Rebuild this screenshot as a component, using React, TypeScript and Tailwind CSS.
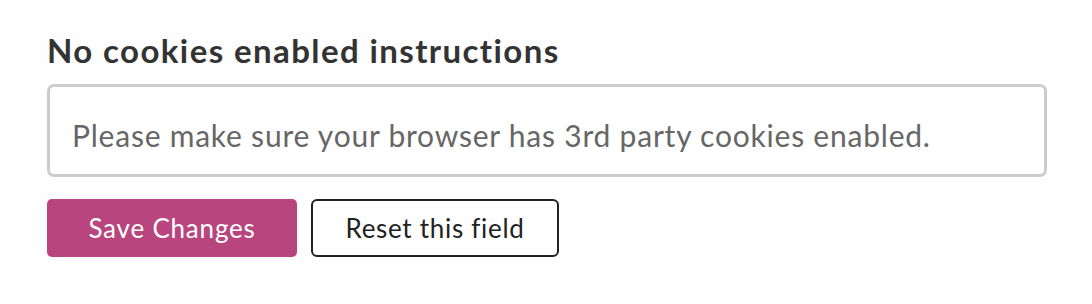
import React from "react";

export default function App() {
  return (
    <div className="w-[1092px] h-[304px] bg-[#fefefe] pl-[47px] pt-[34px] font-['Lato',sans-serif]">
      <h2 className="text-[33px] leading-[32px] font-bold text-[#333333] tracking-[1.4px]">
        No cookies enabled instructions
      </h2>
      <div className="mt-[18px] w-[1000px] h-[93px] rounded-[7px] border-[3px] border-[#cccccc] bg-white flex items-center pl-[22px] pt-[8px]">
        <span className="text-[30px] leading-[30px] text-[#666666] tracking-[0.78px]">
          Please make sure your browser has 3rd party cookies enabled.
        </span>
      </div>
      <div className="mt-[22px] flex gap-[14px]">
        <button className="w-[250px] h-[58px] rounded-[5px] bg-[#b9457e] text-white text-[26px] leading-none tracking-[0.8px] flex items-center justify-center">
          Save Changes
        </button>
        <button className="w-[248px] h-[58px] rounded-[6px] border-2 border-[#222222] bg-white text-[#222222] text-[26px] leading-none tracking-[0.7px] flex items-center justify-center">
          Reset this field
        </button>
      </div>
    </div>
  );
}
